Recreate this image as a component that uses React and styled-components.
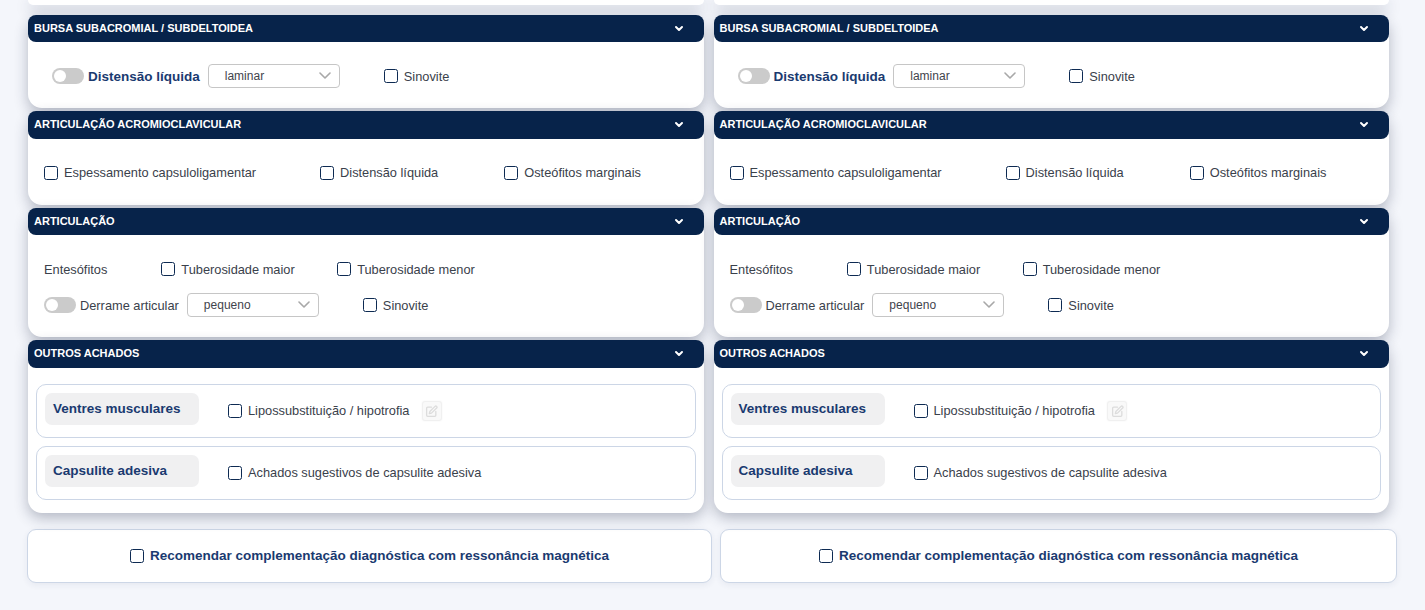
import React from 'react';
import styled, { createGlobalStyle } from 'styled-components';

const Global = createGlobalStyle`
  html, body { margin: 0; padding: 0; height: 610px; overflow: hidden; background: #f4f6fb; }
  body { font-family: "Liberation Sans", Arial, sans-serif; }
`;
const Page = styled.div`
  width: 1425px; height: 610px; box-sizing: border-box; padding-left: 27px;
  display: flex; flex-direction: column; overflow: hidden;
`;
const Columns = styled.div`
  display: flex; gap: 10px; padding-left: 1px;
`;
const Column = styled.div`
  width: 675.5px; display: flex; flex-direction: column;
`;
const Card = styled.section`
  background: #fff; border-radius: 14px; box-shadow: 0 5px 14px rgba(30, 40, 70, .3);
  height: ${p => p.$h}px; margin-bottom: ${p => p.$mb}px; position: relative; box-sizing: border-box;
`;
const Stub = styled(Card)`
  border-radius: 0 0 14px 14px;
`;
const Header = styled.header`
  height: ${p => p.$tall ? 28 : 27}px; background: #07234a; border-radius: 8px; display: flex; align-items: center;
  justify-content: space-between; padding: 0 20px ${p => p.$tall ? 2 : 1}px 6px; box-sizing: border-box;
  color: #fff; font-size: 11px; font-weight: 700; text-transform: uppercase;
`;
const Body = styled.div`
  display: flex; flex-direction: column; gap: ${p => p.$gap || 0}px;
  padding: ${p => p.$pad};
`;
const Row = styled.div`
  display: flex; align-items: center; height: 24px;
`;
const Check = styled.label`
  display: inline-flex; align-items: center; gap: 6px; margin-left: ${p => p.$ml || 0}px;
  color: #3a414b; font-size: 12.8px; white-space: nowrap;
  ${p => p.$strong && 'color: #1a3a70; font-weight: 700; font-size: 13.5px;'}
`;
const CheckText = styled.span`
  padding-bottom: ${p => p.$up ? 2 : 0}px;
`;
const Box = styled.span`
  width: 12px; height: 12px; border: 1.3px solid #0d2a52; border-radius: 2.5px; background: #fff; flex: none;
`;
const Toggle = styled.span`
  width: 32px; height: 16px; border-radius: 8px; background: #cbcbcb; position: relative; flex: none;
  &::after { content: ''; position: absolute; left: 2px; top: 2px; width: 12px; height: 12px; border-radius: 50%; background: #fff; }
`;
const ToggleLabel = styled.span`
  margin-left: 4px; white-space: nowrap; color: ${p => p.$strong ? '#1a3a70' : '#3a414b'};
  font-size: ${p => p.$strong ? 13.5 : 12.8}px; font-weight: ${p => p.$strong ? 700 : 400};
`;
const Select = styled.div`
  width: 132px; height: 24px; box-sizing: border-box; border: 1px solid #c6c6c6; border-radius: 4px; background: #fff;
  margin-left: 8px; padding: 0 8px 1px 16px; display: flex; align-items: center; justify-content: space-between;
  color: #3f444c; font-size: 12px; flex: none;
`;
const Plain = styled.span`
  color: #3a414b; font-size: 12.8px;
`;
const SubCard = styled.div`
  height: 54px; box-sizing: border-box; border: 1px solid #ccd6e6; border-radius: 10px; background: #fff;
  display: flex; padding: 8px; align-items: flex-start;
`;
const Tag = styled.div`
  width: 154px; height: 32px; box-sizing: border-box; background: #f0f0f1; border-radius: 7px; padding: 0 8px 1px;
  display: flex; align-items: center; color: #1a3a70; font-size: 13.5px; font-weight: 700; flex: none;
`;
const SubRow = styled.div`
  display: flex; align-items: center; height: 32px; margin-top: 2px;
`;
const EditBtn = styled.span`
  width: 20px; height: 20px; box-sizing: border-box; margin-left: 12.5px; border: 1px solid #f0f0f0; border-radius: 3px; background: #f9f9f9;
  display: flex; align-items: center; justify-content: center; box-shadow: 0 0 2px rgba(0,0,0,.06);
`;
const Footer = styled.div`
  display: flex; gap: 8px; margin-top: 16px;
`;
const FootBox = styled.div`
  width: ${p => p.$w}px; height: 54px; box-sizing: border-box; background: #fff; border: 1px solid #ccd6e6; border-radius: 9px;
  display: flex; align-items: center; justify-content: center; padding-bottom: 1px; box-shadow: 0 2px 6px rgba(40, 55, 95, .07);
`;

const Chevron = () => (
  <svg width="10" height="7" viewBox="0 0 10 7" fill="none"><path d="M2 2 5 5l3-3" stroke="#fff" strokeWidth="2" strokeLinecap="round" strokeLinejoin="round" /></svg>
);
const SelChevron = () => (
  <svg width="12" height="7" viewBox="0 0 12 7" fill="none"><path d="M1 1 6 6l5-5" stroke="#a8a8a8" strokeWidth="1.6" strokeLinecap="round" strokeLinejoin="round" /></svg>
);
const EditIcon = () => (
  <svg width="13" height="13" viewBox="0 0 24 24" fill="none" stroke="#dcdcdc" strokeWidth="2.4" strokeLinecap="round" strokeLinejoin="round">
    <path d="M12 4H5a2 2 0 0 0-2 2v13a2 2 0 0 0 2 2h13a2 2 0 0 0 2-2v-7" />
    <path d="M18.5 2.5a2.1 2.1 0 0 1 3 3L12 15l-4 1 1-4z" />
  </svg>
);

const CheckItem = ({ children, ml, strong, up }) => (
  <Check $ml={ml} $strong={strong}><Box /><CheckText $up={up}>{children}</CheckText></Check>
);

const Side = () => (
  <Column>
    <Stub $h={5} $mb={10} />
    <Card $h={93} $mb={3}>
      <Header>Bursa subacromial / subdeltoidea<Chevron /></Header>
      <Body $pad="22px 0 0 24px">
        <Row>
          <Toggle />
          <ToggleLabel $strong>Distensão líquida</ToggleLabel>
          <Select>laminar<SelChevron /></Select>
          <CheckItem ml={44}>Sinovite</CheckItem>
        </Row>
      </Body>
    </Card>
    <Card $h={94} $mb={3}>
      <Header $tall>Articulação acromioclavicular<Chevron /></Header>
      <Body $pad="22px 0 0 16px">
        <Row>
          <CheckItem up>Espessamento capsuloligamentar</CheckItem>
          <CheckItem ml={64} up>Distensão líquida</CheckItem>
          <CheckItem ml={66} up>Osteófitos marginais</CheckItem>
        </Row>
      </Body>
    </Card>
    <Card $h={129} $mb={3}>
      <Header>Articulação<Chevron /></Header>
      <Body $pad="22px 0 0 16px" $gap={12}>
        <Row>
          <Plain>Entesófitos</Plain>
          <CheckItem ml={54}>Tuberosidade maior</CheckItem>
          <CheckItem ml={42.5}>Tuberosidade menor</CheckItem>
        </Row>
        <Row>
          <Toggle />
          <ToggleLabel>Derrame articular</ToggleLabel>
          <Select>pequeno<SelChevron /></Select>
          <CheckItem ml={44}>Sinovite</CheckItem>
        </Row>
      </Body>
    </Card>
    <Card $h={173} $mb={0}>
      <Header $tall>Outros achados<Chevron /></Header>
      <Body $pad="16px 8px 0" $gap={8}>
        <SubCard>
          <Tag>Ventres musculares</Tag>
          <SubRow>
            <CheckItem ml={29} up>Lipossubstituição / hipotrofia</CheckItem>
            <EditBtn><EditIcon /></EditBtn>
          </SubRow>
        </SubCard>
        <SubCard>
          <Tag>Capsulite adesiva</Tag>
          <SubRow>
            <CheckItem ml={29} up>Achados sugestivos de capsulite adesiva</CheckItem>
          </SubRow>
        </SubCard>
      </Body>
    </Card>
  </Column>
);

export default function App() {
  return (
    <Page>
      <Global />
      <Columns>
        <Side />
        <Side />
      </Columns>
      <Footer>
        <FootBox $w={685}><CheckItem strong>Recomendar complementação diagnóstica com ressonância magnética</CheckItem></FootBox>
        <FootBox $w={677}><CheckItem strong>Recomendar complementação diagnóstica com ressonância magnética</CheckItem></FootBox>
      </Footer>
    </Page>
  );
}
